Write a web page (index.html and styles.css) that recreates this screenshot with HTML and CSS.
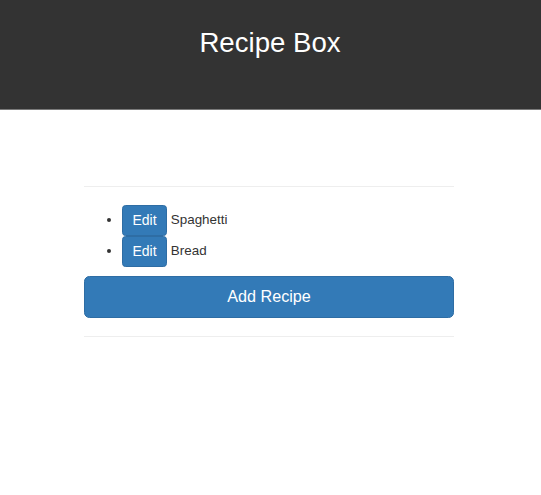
FILE: index.html
```html
<!DOCTYPE html>
<html>
<head>
<meta charset="utf-8">
<link rel="stylesheet" href="styles.css">
</head>
<body>
<header class="top">
  <h1 class="title">Recipe Box</h1>
</header>
<main class="box">
  <hr class="rule">
  <ul class="recipes">
    <li><button class="btn btn-edit">Edit</button> Spaghetti</li>
    <li><button class="btn btn-edit">Edit</button> Bread</li>
  </ul>
  <button class="btn btn-add">Add Recipe</button>
  <hr class="rule">
</main>
</body>
</html>
```
FILE: styles.css
```css
* { box-sizing: border-box; }
html, body { margin: 0; padding: 0; background: #fff; }
body {
  font-family: "Liberation Sans", Arial, sans-serif;
  font-size: 13.4px;
  color: #333;
}
.top {
  background: #333;
  height: 110px;
  border-bottom: 1px solid #7a7a7a;
  padding-top: 28px;
}
.title {
  margin: 0 0 0 -1px;
  color: #fff;
  font-weight: 400;
  font-size: 27.6px;
  line-height: 1.1;
  text-align: center;
}
.box {
  width: 370px;
  margin: 0 0 0 84px;
  padding-top: 58px;
}
.rule {
  margin: 18px 0;
  border: 0;
  border-top: 1px solid #eee;
}
.recipes {
  margin: 0 0 9px;
  padding-left: 38px;
}
.recipes li { line-height: 18px; }
.btn {
  font-family: inherit;
  color: #fff;
  background: #337ab7;
  border: 1px solid #2e6da4;
  cursor: pointer;
}
.btn-edit {
  display: inline-block;
  font-size: 14px;
  line-height: 19px;
  padding: 5px 9.5px;
  border-radius: 3.6px;
  vertical-align: middle;
}
.btn-add {
  display: block;
  width: 100%;
  font-size: 16.2px;
  line-height: 21.6px;
  padding: 9px 14.4px;
  border-radius: 5.4px;
}
```
